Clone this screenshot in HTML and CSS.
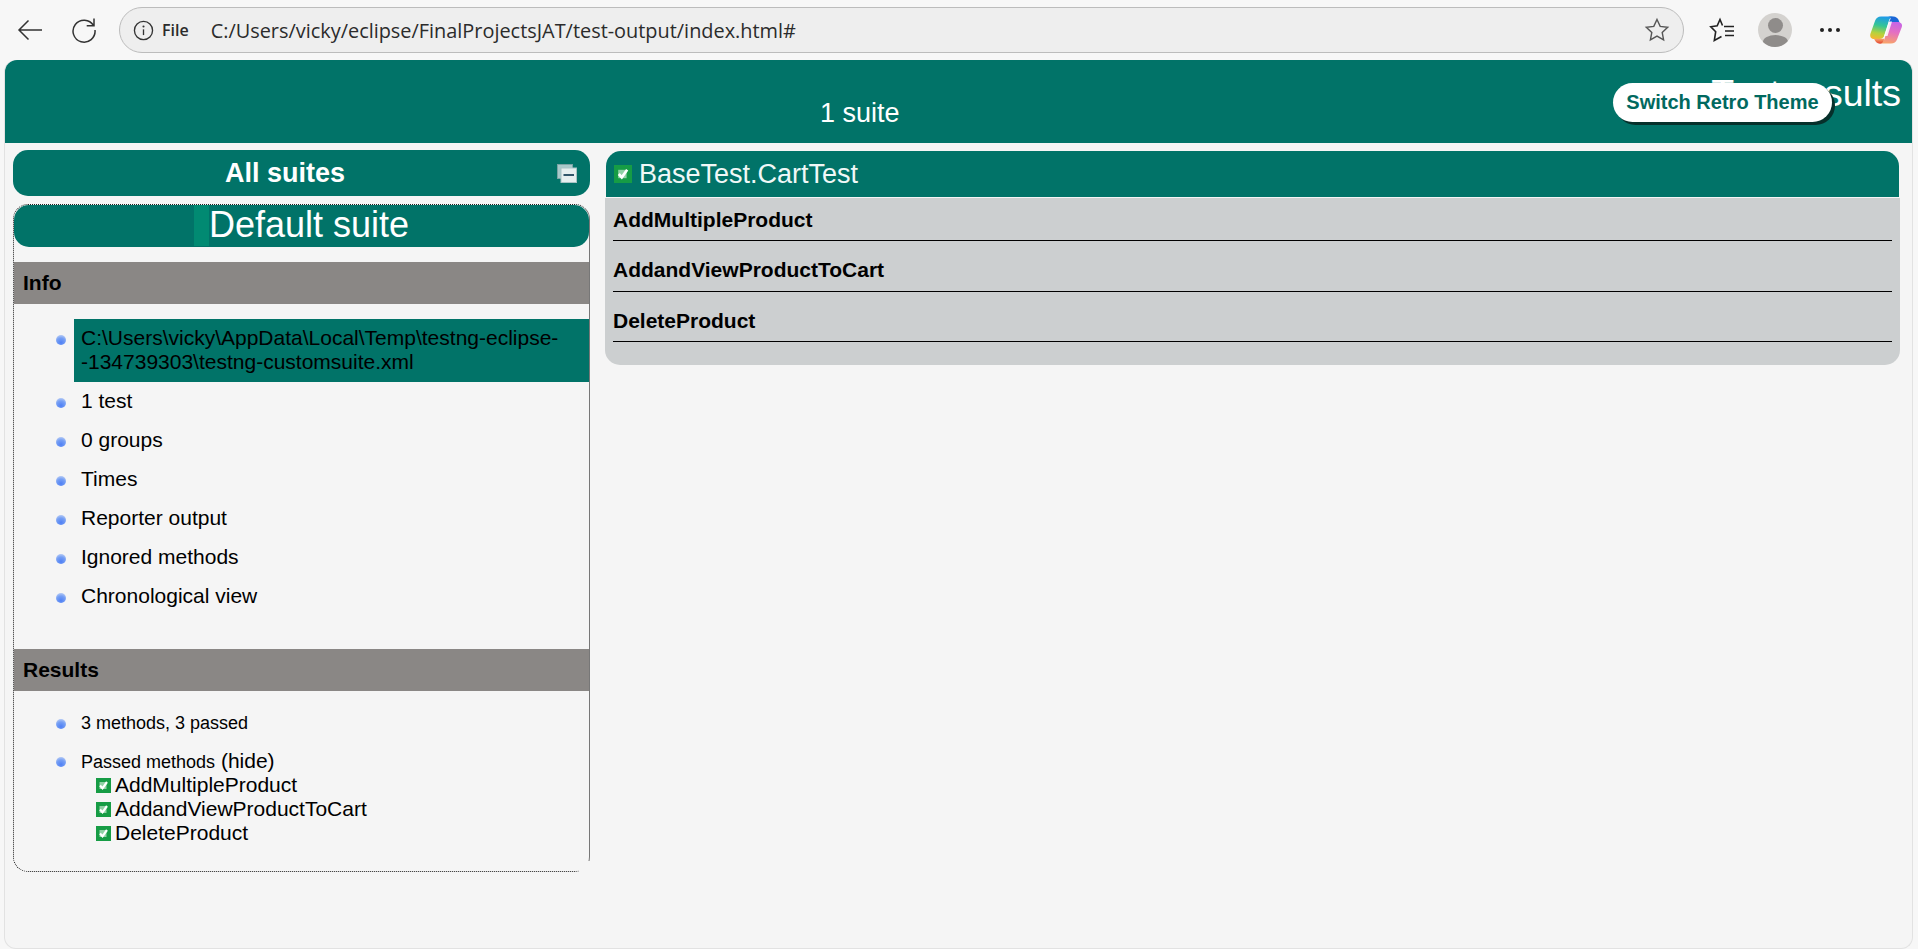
FILE: index.html
```html
<!DOCTYPE html>
<html lang="en">
<head>
  <meta charset="UTF-8" />
  <title>TestNG reports</title>
  <link rel="stylesheet" href="styles.css">
</head>
<body>
  <div class="toolbar">
    <svg class="tool-icon back" viewBox="0 0 26 22"><path d="M25 11H2M11.500 1.500 2 11l9.500 9.500"/></svg>
    <svg class="tool-icon reload" viewBox="0 0 26 26"><path d="M22.500 8.500A11 11 0 1 0 24 13M23 1.500v7.300h-7.300"/></svg>
    <div class="address">
      <svg class="info-icon" viewBox="0 0 22 22"><circle cx="11" cy="11" r="9.500"/><path d="M11 9.800v6"/><circle class="dot" cx="11" cy="6.800" r="1.100"/></svg>
      <span class="file-label">File</span>
      <span class="url">C:/Users/vicky/eclipse/FinalProjectsJAT/test-output/index.html#</span>
      <svg class="star" viewBox="0 0 26 26"><path d="M13 2.500l3.200 6.900 7.500.9-5.500 5.100 1.400 7.400-6.600-3.700-6.600 3.700 1.400-7.400-5.500-5.100 7.500-.9z"/></svg>
    </div>
    <svg class="tool-icon favorites" viewBox="0 0 26 26"><path d="M13.500 8.500 11 2.500 8.200 8.800 1.800 9.700 6.700 14.700 5.300 23.500 12.500 19.500M15 9.500h10M16 14h9M16 18.500h9"/></svg>
    <div class="avatar"><span class="avatar-head"></span><span class="avatar-body"></span></div>
    <div class="dots"><span></span><span></span><span></span></div>
    <svg class="copilot" viewBox="0 0 34 30">
      <defs>
        <linearGradient id="copA" x1="0.5" y1="0" x2="0.3" y2="1">
          <stop offset="0" stop-color="#1f9be8"/>
          <stop offset="0.4" stop-color="#35c596"/>
          <stop offset="0.75" stop-color="#b6d23c"/>
          <stop offset="1" stop-color="#f2b92f"/>
        </linearGradient>
        <linearGradient id="copB" x1="0.6" y1="0" x2="0.4" y2="1">
          <stop offset="0" stop-color="#c765e6"/>
          <stop offset="0.45" stop-color="#e46fc2"/>
          <stop offset="1" stop-color="#f8a36a"/>
        </linearGradient>
        <linearGradient id="copD" x1="0" y1="0" x2="0" y2="1">
          <stop offset="0" stop-color="#f7a56c"/>
          <stop offset="1" stop-color="#e23f2c"/>
        </linearGradient>
      </defs>
      <path fill="url(#copA)" d="M12 1.500H25C22 1.500 20.500 3.500 19.800 6L15.500 20C14.700 22.500 13 24 10.500 24H5C2 24 .5 21.500 1.500 18.500L6 6C7 3 9 1.500 12 1.500z"/>
      <path fill="#1a66d6" d="M19 1.500H24C27 1.500 29 3 30 6L31 9.500C29 7.500 27 7 25 7H20L21.500 4C22 2.500 21 1.500 19 1.500z"/>
      <path fill="url(#copB)" d="M21 7H28.500C32 7 33.800 9.500 32.800 12L28 24.500C27 27 25 28.500 22 28.500H10C13 28.500 14.800 26.500 15.500 24L19.500 10.500C20 8.500 20.300 7.500 21 7z"/>
      <path fill="url(#copD)" d="M5 23.800h10.500l-1 2.500c-.7 1.500-2 2.500-3.500 2.500-3 0-5-2.500-6-5z"/>
      <path fill="#fff" opacity="0.85" d="M20 6.500H23L18.500 21H15z"/>
    </svg>
  </div>

  <div class="page">
    <div class="top-banner">
      <div class="banner-sub">1 suite</div>
      <h1 class="banner-title">Test results</h1>
      <button class="theme-btn">Switch Retro Theme</button>
    </div>

    <div class="main">
      <div class="navigator">
        <div class="all-suites">
          <span class="all-suites-title">All suites</span>
          <svg class="collapse-icon" viewBox="0 0 20 19">
            <rect class="back-win" x="0.500" y="0.500" width="15" height="14"/>
            <rect class="front-win" x="4" y="4" width="15.500" height="14.500"/>
            <rect class="minus" x="6.500" y="10" width="10.500" height="2"/>
          </svg>
        </div>
        <div class="suite-panel">
          <div class="suite-name"><span class="suite-strip"></span>Default suite</div>

          <div class="section-head">Info</div>
          <ul class="nav-list">
            <li><span class="nav-text selected">C:\Users\vicky\AppData\Local\Temp\testng-eclipse-<br>-134739303\testng-customsuite.xml</span></li>
            <li><span class="nav-text">1 test</span></li>
            <li><span class="nav-text">0 groups</span></li>
            <li><span class="nav-text">Times</span></li>
            <li><span class="nav-text">Reporter output</span></li>
            <li><span class="nav-text">Ignored methods</span></li>
            <li><span class="nav-text">Chronological view</span></li>
          </ul>

          <div class="section-head results-head">Results</div>
          <ul class="nav-list results-list">
            <li><span class="nav-text small">3 methods, 3 passed</span></li>
            <li>
              <div class="nav-text">
                <span class="small">Passed methods</span> (hide)
                <div class="method-row"><svg class="pass-icon"><use href="#pass"/></svg>AddMultipleProduct</div>
                <div class="method-row"><svg class="pass-icon"><use href="#pass"/></svg>AddandViewProductToCart</div>
                <div class="method-row"><svg class="pass-icon"><use href="#pass"/></svg>DeleteProduct</div>
              </div>
            </li>
          </ul>
          <span class="corner-cover"></span>
        </div>
      </div>

      <div class="detail">
        <div class="test-head">
          <svg class="pass-icon big"><use href="#pass"/></svg>
          <span>BaseTest.CartTest</span>
        </div>
        <div class="test-body">
          <div class="test-row">AddMultipleProduct</div>
          <div class="test-row">AddandViewProductToCart</div>
          <div class="test-row">DeleteProduct</div>
        </div>
      </div>
    </div>
  </div>

  <svg class="defs-only">
    <symbol id="pass" viewBox="0 0 15 15">
      <rect width="15" height="15" fill="#169c45"/>
      <rect x="3.500" y="4" width="7" height="7" fill="#8fd0a4"/>
      <path d="M4 7.500l2.500 2.800 4.500-6.300" fill="none" stroke="#fff" stroke-width="2.200"/>
    </symbol>
  </svg>
</body>
</html>
```

FILE: styles.css
```css
html, body {
  height: 100%;
}
body {
  margin: 0;
  background: #f7f7f7;
  font-family: "Liberation Sans", Arial, sans-serif;
  color: #000;
  overflow: hidden;
}
.defs-only {
  width: 0;
  height: 0;
  display: block;
}

/* browser chrome */
.toolbar {
  height: 60px;
  box-sizing: border-box;
  display: flex;
  align-items: center;
  padding: 0 15px 0 17px;
}
.tool-icon {
  fill: none;
  stroke: #333;
  stroke-width: 1.5;
  flex: none;
}
.back {
  width: 26px;
  height: 22px;
}
.reload {
  width: 26px;
  height: 26px;
  margin-left: 28px;
}
.address {
  flex: 1;
  height: 46px;
  margin-left: 22px;
  box-sizing: border-box;
  display: flex;
  align-items: center;
  background: #eeeeee;
  border: 1px solid #bcbcbc;
  border-radius: 23px;
  padding: 0 13px 0 13px;
  font-family: "Open Sans", "Noto Sans", sans-serif;
  color: #2b2b2b;
}
.info-icon {
  width: 21px;
  height: 21px;
  fill: none;
  stroke: #333;
  stroke-width: 1.400;
}
.info-icon .dot {
  fill: #333;
  stroke: none;
}
.file-label {
  font-size: 16px;
  font-weight: 600;
  margin-left: 8px;
}
.url {
  font-size: 19.900px;
  margin-left: 22px;
  flex: 1;
}
.star {
  width: 26px;
  height: 26px;
  fill: none;
  stroke: #555;
  stroke-width: 1.400;
}
.favorites {
  width: 26px;
  height: 26px;
  margin-left: 25px;
  stroke-width: 1.600;
  stroke: #222;
}
.avatar {
  width: 34px;
  height: 34px;
  flex: none;
  margin-left: 23px;
  border-radius: 50%;
  background: #d4d2cf;
  overflow: hidden;
  display: flex;
  flex-direction: column;
  align-items: center;
}
.avatar-head {
  width: 15px;
  height: 15px;
  flex: none;
  margin-top: 5px;
  border-radius: 50%;
  background: #8f8c8a;
}
.avatar-body {
  width: 25px;
  height: 14px;
  flex: none;
  margin-top: 2px;
  border-radius: 50% 50% 0 0;
  background: #8f8c8a;
}
.dots {
  display: flex;
  flex: none;
  gap: 4px;
  margin-left: 28px;
}
.dots span {
  width: 4px;
  height: 4px;
  border-radius: 50%;
  background: #222;
}
.copilot {
  width: 34px;
  height: 30px;
  flex: none;
  margin-left: 29px;
}

/* report */
.page {
  margin: 0 5px 0 4px;
  height: 889px;
  box-sizing: border-box;
  background: #f5f5f5;
  border: 1px solid #e2e2e2;
  border-top: none;
  border-radius: 12px 12px 12px 12px;
}
.top-banner {
  position: relative;
  height: 83px;
  box-sizing: border-box;
  display: flex;
  justify-content: space-between;
  background: #017368;
  color: #fff;
  border-radius: 12px 12px 0 0;
  padding: 12px 11px 14px 815px;
}
.banner-sub {
  align-self: flex-end;
  font-size: 27px;
}
.banner-title {
  margin: 0;
  font-size: 37.500px;
  font-weight: normal;
}
.theme-btn {
  position: absolute;
  left: 1608px;
  top: 23px;
  width: 219px;
  height: 39px;
  padding: 0;
  border: none;
  border-radius: 20px;
  background: #fff;
  color: #01695f;
  font-family: inherit;
  font-size: 20px;
  font-weight: bold;
  box-shadow: 3px 3px 0 #06302b;
}
.main {
  display: flex;
  align-items: flex-start;
  gap: 15px;
  padding: 7px 12px 0 8px;
}

/* left side */
.navigator {
  width: 577px;
  flex: none;
}
.all-suites {
  height: 46px;
  display: flex;
  align-items: center;
  padding-right: 13px;
  background: #017368;
  color: #fff;
  border-radius: 15px;
  font-size: 27px;
  font-weight: bold;
}
.all-suites-title {
  flex: 1;
  text-align: center;
}
.collapse-icon {
  width: 20px;
  height: 19px;
}
.back-win {
  fill: #a9c9ca;
  stroke: #7aa3a4;
}
.front-win {
  fill: #e6efef;
  stroke: #a9c4c5;
}
.minus {
  fill: #31566a;
}
.suite-panel {
  position: relative;
  margin-top: 8px;
  height: 668px;
  box-sizing: border-box;
  border: 1px dotted #222;
  border-right: 1px solid #777;
  border-radius: 15px;
}
.suite-name {
  height: 42px;
  box-sizing: border-box;
  padding-bottom: 2px;
  display: flex;
  justify-content: center;
  align-items: center;
  background: #017368;
  color: #fff;
  border-radius: 15px;
  font-size: 36px;
  line-height: 40px;
}
.suite-strip {
  width: 15px;
  height: 41px;
  align-self: flex-start;
  background: #018a72;
}
.section-head {
  margin-top: 15px;
  padding: 9px;
  background: #8a8785;
  font-size: 21px;
  font-weight: bold;
  line-height: 24px;
}
.results-head {
  margin-top: 33px;
}
.nav-list {
  list-style: none;
  margin: 0;
  padding: 15px 0 0 42px;
  font-size: 21px;
  line-height: 24px;
}
.nav-list li {
  display: flex;
  align-items: flex-start;
}
/* the blue ball in front of every item */
.nav-list li::before {
  content: "";
  flex: none;
  width: 10px;
  height: 10px;
  margin: 16px 8px 0 0;
  border-radius: 50%;
  background: radial-gradient(circle at 50% 75%, #4f80f5 0, #769ff4 50%, #d5e0f5 100%);
}
.results-list li::before {
  margin-top: 15px;
}
.results-list li:first-child::before {
  margin-top: 13px;
}
.nav-text {
  flex: 1;
  padding: 7px 7px 8px 7px;
}
.selected {
  background: #017368;
}
.small {
  font-size: 18px;
  line-height: 21px;
}
.method-row {
  display: flex;
  align-items: center;
  padding-left: 15px;
  white-space: nowrap;
}
.pass-icon {
  width: 15px;
  height: 15px;
  margin-right: 4px;
  flex: none;
}
.corner-cover {
  position: absolute;
  right: -2px;
  bottom: -2px;
  width: 12px;
  height: 12px;
  background: #f5f5f5;
}

/* right side */
.detail {
  width: 1295px;
  flex: none;
  margin-top: 1px;
}
.test-head {
  height: 46px;
  margin: 0 1px 0 1px;
  display: flex;
  align-items: center;
  padding-left: 8px;
  background: #017368;
  color: #f0f8f7;
  border-radius: 15px 15px 0 0;
  font-size: 27px;
}
.pass-icon.big {
  width: 18px;
  height: 18px;
  margin-right: 7px;
}
.test-body {
  margin-top: 1px;
  padding: 10px 8px 8px 8px;
  background: #cccfd0;
  border-radius: 0 0 15px 15px;
}
.test-row {
  padding-bottom: 8px;
  margin-bottom: 17px;
  border-bottom: 1px solid #000;
  font-size: 21px;
  font-weight: bold;
  line-height: 24px;
}
.test-row:nth-child(2) {
  padding-bottom: 9px;
}
.test-row:last-child {
  margin-bottom: 15px;
}
```
